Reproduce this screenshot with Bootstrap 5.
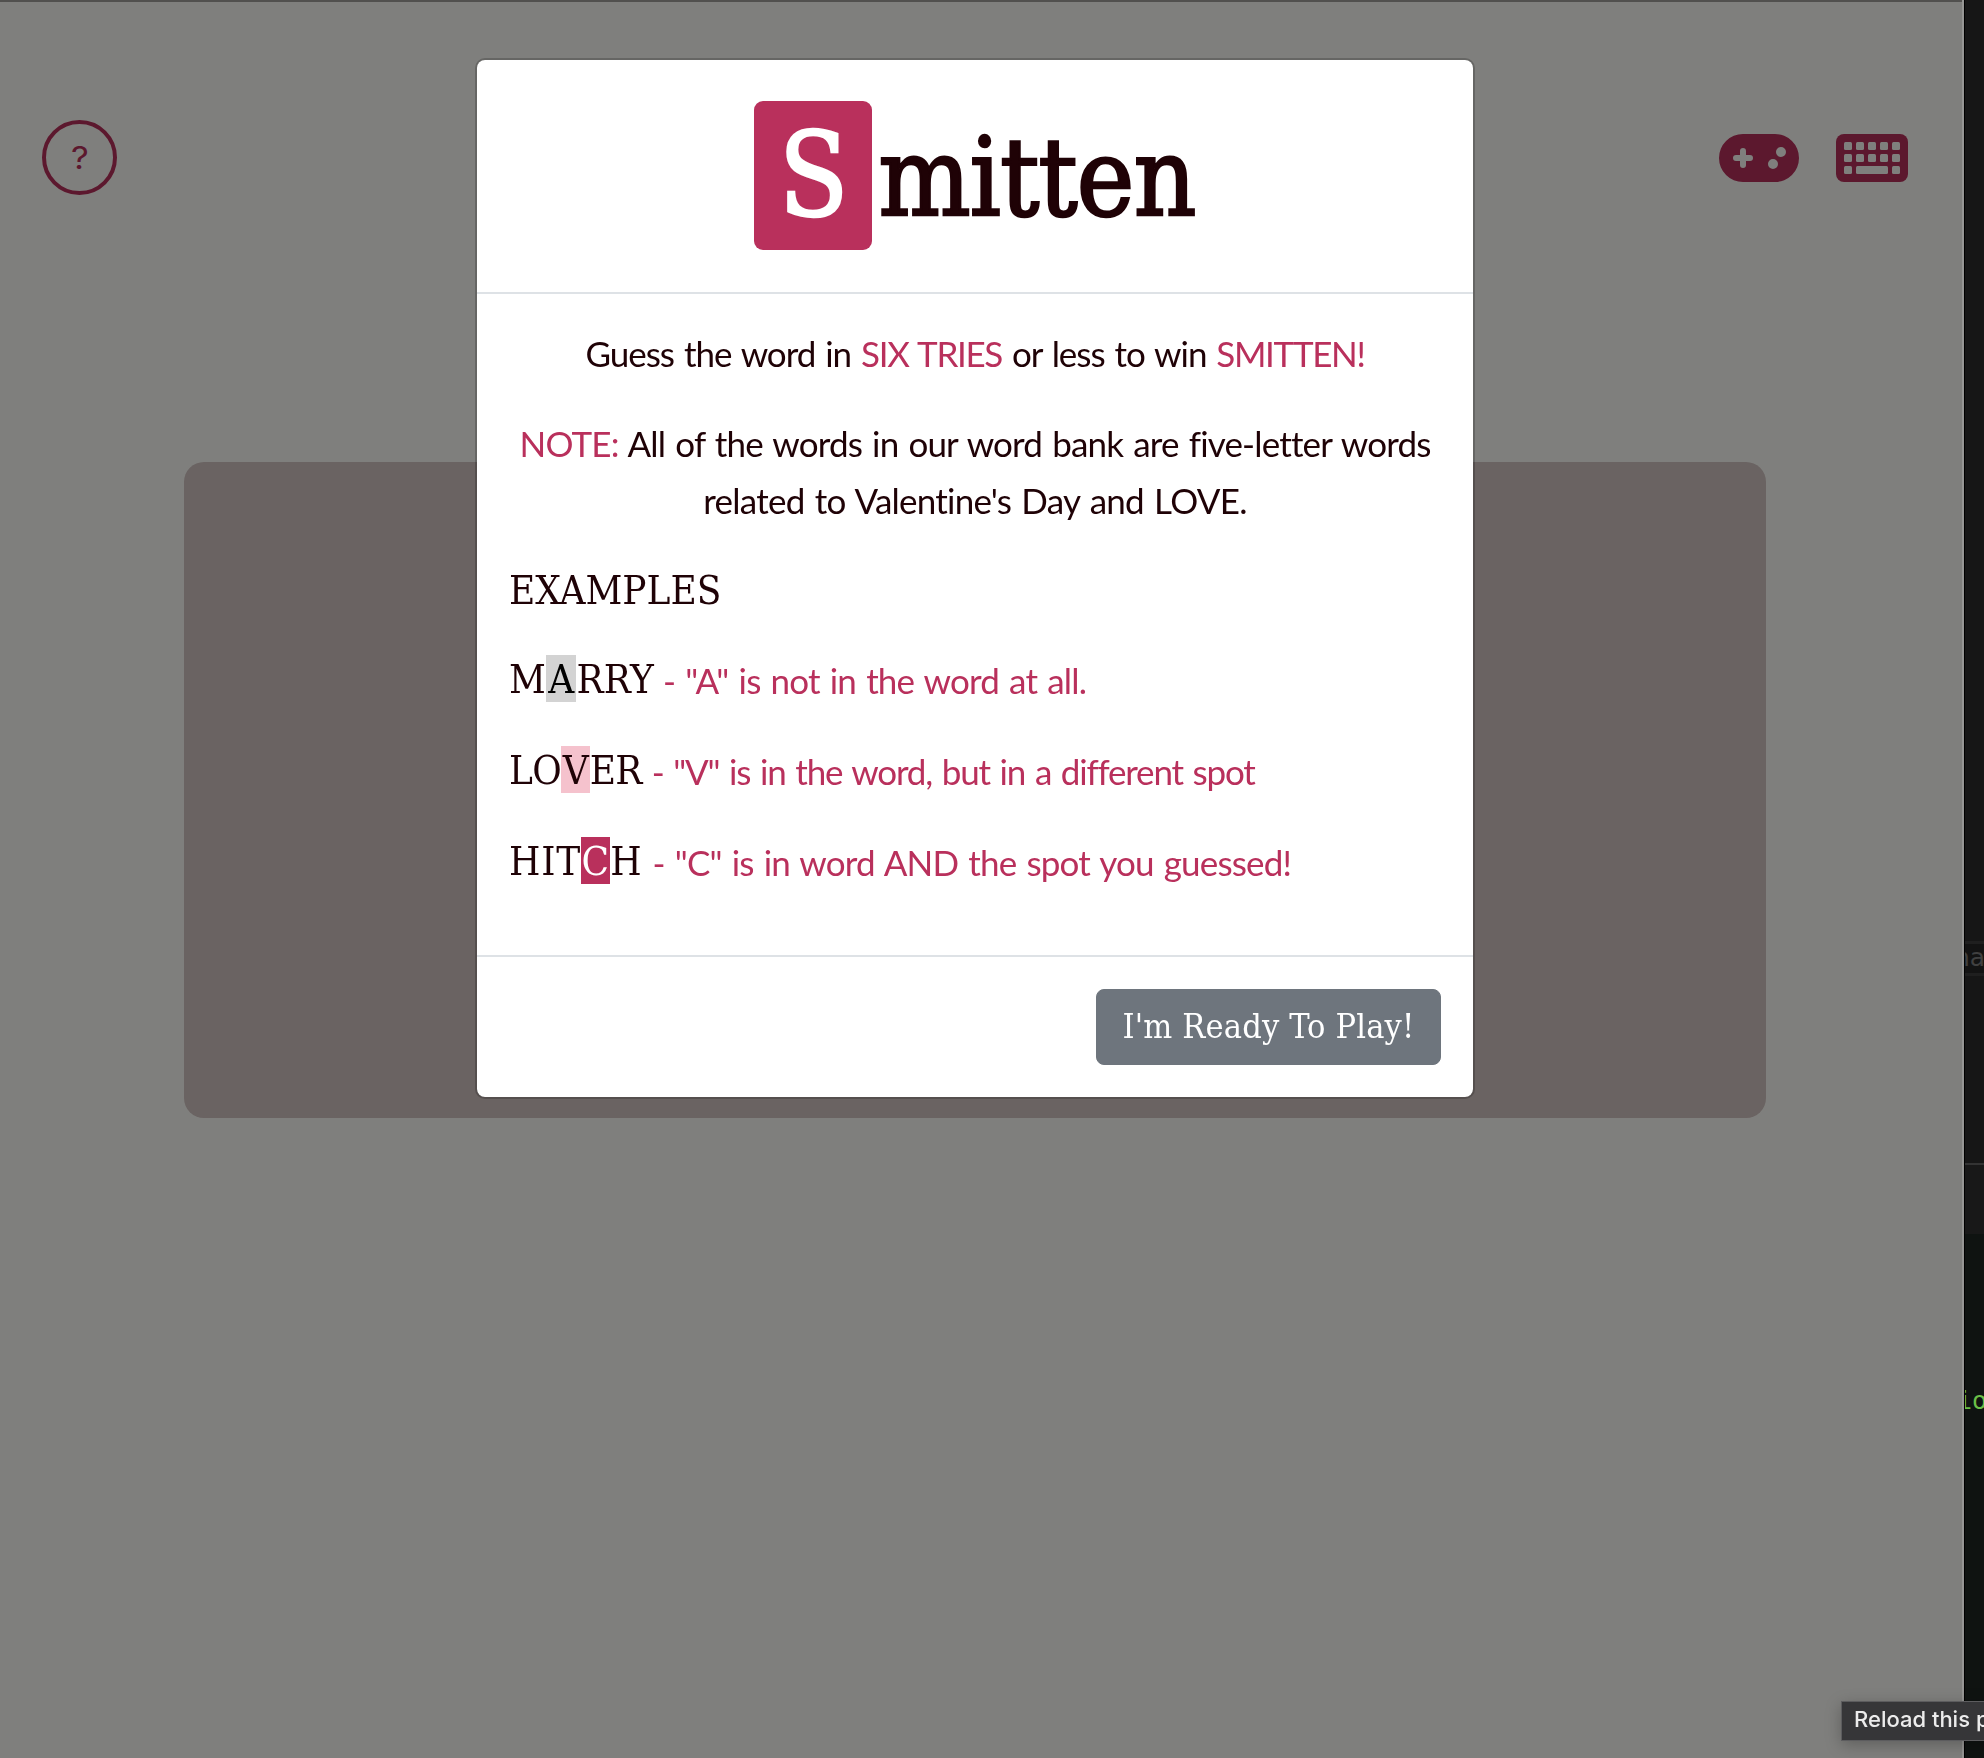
<!DOCTYPE html>
<html lang="en">
<head>
<meta charset="utf-8">
<meta name="viewport" content="width=device-width, initial-scale=1">
<title>Smitten</title>
<link href="https://cdn.jsdelivr.net/npm/bootstrap@5.3.0/dist/css/bootstrap.min.css" rel="stylesheet">
<style>
  :root { --rose: #b9305c; --ink: #1f0206; --slab: "DejaVu Serif Condensed", "DejaVu Serif", serif; }
  body { height: 1758px; background: #161616; color: var(--ink); font-family: Lato, sans-serif; }
  .app-window { width: 1964px; border-right: 2px solid #969694; }
  .app-page { background: #fffffa; border-top: 2px solid #a3a19d; }
  .app-bar { padding: 118px 54px 0 42px; height: 262px; }
  .help-btn { width: 75px; height: 75px; border: 4px solid var(--rose); color: var(--rose); font: 400 31px/1 Inter, sans-serif; }
  .help-btn span { transform: scaleX(1.12); }
  .tool-icons { gap: 37.5px; color: var(--rose); margin-top: 14px; }
  .board { width: 1582px; height: 656px; margin: 198px 0 0 184px; border-radius: 20px; background: #d4c6c4; }
  .modal { width: 1962px; height: 1758px; }
  .modal-backdrop { width: 1962px; height: 1758px; }
  .modal-dialog { width: 1000px; max-width: none; margin: 58px auto 0; left: -6px; }
  .modal-content { border: 2px solid rgba(0,0,0,.2); border-radius: 10px; color: var(--ink); height: 1041px; }
  .modal-header { height: 234px; padding: 41px 0 0; border-bottom: 2px solid #dee2e6; }
  .logo-tile { width: 118px; height: 149px; border-radius: 9px; background: var(--rose); color: #fff; }
  .logo { font-family: var(--slab); line-height: 149px; }
  .logo-tile span { font-size: 116px; line-height: 147px; -webkit-text-stroke: 2.5px #fff; transform: scaleX(.97); }
  .logo-rest { font-size: 108px; line-height: 153px; letter-spacing: -.7px; -webkit-text-stroke: 2.5px var(--ink); margin-left: 6px; }
  .modal-body { padding: 31px 32px 0; font-size: 35px; line-height: 57px; white-space: nowrap; word-spacing: 2px; }
  .modal-body p { margin-bottom: 33.2px; }
  .modal-body p.sample { height: 57px; margin-bottom: 34px; }
  .modal-body p.samples-title { margin-bottom: 31.5px; }
  .rose { color: var(--rose); }
  .fit-a { letter-spacing: -.84px; }
  .fit-b { letter-spacing: -.75px; }
  .fit-c { letter-spacing: -1.02px; }
  .fit-d { letter-spacing: -1.35px; }
  .fit-e { letter-spacing: -1.2px; }
  .word { font-family: var(--slab); font-size: 40px; letter-spacing: 0; word-spacing: 0; }
  span.word { vertical-align: 1px; }
  .word-m { letter-spacing: .3px; margin-right: -2px; }
  .word-l { letter-spacing: -.6px; margin-right: -1px; }
  .word-h { letter-spacing: .8px; margin-right: -1px; }
  .hit-none { background: #d3d3d3; padding: 1px 2px 0; color: #000; }
  .hit-near { background: #f5c2cd; padding: 1px 1.5px 0; }
  .hit-spot { background: var(--rose); padding: 1px .5px 0; color: #fff; }
  .modal-footer { height: 142px; padding: 0 32px 0 0; border-top: 2px solid #dee2e6; }
  .modal-footer > .btn { width: 345px; height: 76px; margin: 0; border-radius: 8px; font: 34px/1 var(--slab); letter-spacing: .15px; padding: 0 0 2px; background: #6e757d; border-color: #6e757d; }
  .side { border-left: 1px solid #000; overflow: hidden; }
  .side-top { height: 941px; }
  .side-field { height: 35px; border: solid #1f1f1f; border-width: 3px 0; background: #131313; color: #404040; font: 25px/27px "DejaVu Sans", sans-serif; }
  .side-field span, .side-code span { display: block; }
  .side-field span { margin-left: -11px; }
  .side-gap { height: 187px; }
  .side-foot { height: 71px; border-top: 2px solid #333; background: #181818; }
  .side-code { background: #0f1311; color: #6abf47; font: 25px/30px "DejaVu Sans Mono", monospace; padding-top: 152px; }
  .side-code span { margin-left: -8px; }
  .reload-tip { position: absolute; z-index: 2000; left: 1841px; top: 1701px; width: 160px; height: 40px; background: #363638; border: 1px solid #5c5c5e; color: #ececec; font: 500 22px/35px Inter, sans-serif; padding-left: 12px; white-space: nowrap; box-shadow: 0 4px 16px rgba(0,0,0,.25); }
</style>
<script src="https://cdn.jsdelivr.net/npm/bootstrap@5.3.0/dist/js/bootstrap.bundle.min.js"></script>
</head>
<body class="d-flex overflow-hidden position-relative">
  <div class="app-window flex-shrink-0 position-relative">
    <main class="app-page h-100">
      <header class="app-bar d-flex justify-content-between align-items-start">
        <button class="help-btn rounded-circle bg-transparent d-flex align-items-center justify-content-center p-0" aria-label="Help"><span>?</span></button>
        <div class="tool-icons d-flex">
          <svg width="80" height="48" viewBox="0 0 80 48" fill="currentColor" fill-rule="evenodd">
            <path d="M24 0H56A24 24 0 0 1 56 48H24A24 24 0 0 1 24 0ZM24 14A3 3 0 0 0 21 17V21H17A3 3 0 0 0 17 27H21V31A3 3 0 0 0 27 31V27H31A3 3 0 0 0 31 21H27V17A3 3 0 0 0 24 14ZM62 13A5 5 0 1 0 62 23A5 5 0 1 0 62 13ZM54 25A5 5 0 1 0 54 35A5 5 0 1 0 54 25Z"/>
          </svg>
          <svg width="72" height="48" viewBox="0 0 72 48">
            <rect width="72" height="48" rx="8" fill="currentColor"/>
            <g fill="#fffffa">
              <rect x="8" y="8" width="8" height="8" rx="1.5"/><rect x="20" y="8" width="8" height="8" rx="1.5"/><rect x="32" y="8" width="8" height="8" rx="1.5"/><rect x="44" y="8" width="8" height="8" rx="1.5"/><rect x="56" y="8" width="8" height="8" rx="1.5"/>
              <rect x="8" y="20" width="8" height="8" rx="1.5"/><rect x="20" y="20" width="8" height="8" rx="1.5"/><rect x="32" y="20" width="8" height="8" rx="1.5"/><rect x="44" y="20" width="8" height="8" rx="1.5"/><rect x="56" y="20" width="8" height="8" rx="1.5"/>
              <rect x="8" y="32" width="8" height="8" rx="1.5"/><rect x="20" y="32" width="32" height="8" rx="1.5"/><rect x="56" y="32" width="8" height="8" rx="1.5"/>
            </g>
          </svg>
        </div>
      </header>
      <section class="board"></section>
    </main>
    <div class="modal-backdrop show"></div>
    <div class="modal d-block" tabindex="-1">
      <div class="modal-dialog">
        <div class="modal-content">
          <div class="modal-header d-flex justify-content-center align-items-start">
            <h1 class="logo d-flex m-0 fw-normal"><span class="logo-tile d-flex justify-content-center"><span>S</span></span><span class="logo-rest">mitten</span></h1>
          </div>
          <div class="modal-body">
            <p class="text-center fit-c">Guess the word in <span class="rose fit-d">SIX TRIES</span> or less to win <span class="rose fit-d">SMITTEN!</span></p>
            <p class="text-center fit-a"><span class="rose">NOTE:</span> All of the words in our word bank are five-letter words<br><span class="fit-b">related to Valentine's Day and LOVE.</span></p>
            <p class="word samples-title">EXAMPLES</p>
            <p class="sample"><span class="word word-m">M<span class="hit-none">A</span>RRY</span> <span class="rose fit-a">- "A" is not in the word at all.</span></p>
            <p class="sample"><span class="word word-l">LO<span class="hit-near">V</span>ER</span> <span class="rose fit-e">- "V" is in the word, but in a different spot</span></p>
            <p class="sample"><span class="word word-h">HIT<span class="hit-spot">C</span>H</span> <span class="rose fit-a">- "C" is in word AND the spot you guessed!</span></p>
          </div>
          <div class="modal-footer">
            <button type="button" class="btn btn-secondary">I'm Ready To Play!</button>
          </div>
        </div>
      </div>
    </div>
  </div>
  <aside class="side flex-grow-1 d-flex flex-column">
    <div class="side-top"></div>
    <div class="side-field"><span>na</span></div>
    <div class="side-gap"></div>
    <div class="side-foot"></div>
    <div class="side-code flex-grow-1"><span>io</span></div>
  </aside>
  <div class="reload-tip">Reload this page</div>
</body>
</html>
